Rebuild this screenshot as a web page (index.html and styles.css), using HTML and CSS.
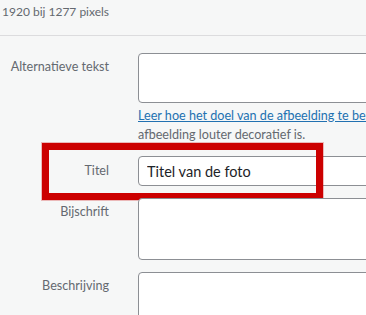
FILE: index.html
```html
<!DOCTYPE html>
<html lang="nl">
<head>
<meta charset="utf-8">
<title>Bijlage details</title>
<link rel="stylesheet" href="styles.css">
</head>
<body>
<div class="page">
  <div class="meta">1920 bij 1277 pixels</div>
  <div class="settings">
    <div class="row">
      <label class="label label-ta" for="alt">Alternatieve tekst</label>
      <div class="field">
        <textarea id="alt" class="ta ta-alt"></textarea>
        <p class="desc"><a href="#" class="link">Leer hoe het doel van de afbeelding te beschrijven</a><br>afbeelding louter decoratief is.</p>
      </div>
    </div>
    <div class="row row-title">
      <label class="label label-input" for="title">Titel</label>
      <div class="field">
        <input id="title" class="input" type="text" value="Titel van de foto">
      </div>
      <div class="highlight"></div>
    </div>
    <div class="row">
      <label class="label label-ta" for="caption">Bijschrift</label>
      <div class="field">
        <textarea id="caption" class="ta ta-caption"></textarea>
      </div>
    </div>
    <div class="row">
      <label class="label label-ta" for="desc">Beschrijving</label>
      <div class="field">
        <textarea id="desc" class="ta ta-desc"></textarea>
      </div>
    </div>
  </div>
</div>
</body>
</html>
```

FILE: styles.css
```css
html, body {
  margin: 0;
  padding: 0;
  background: #f6f7f7;
  overflow: hidden;
}
body {
  font-family: "Lato", "Noto Sans", sans-serif;
  font-size: 12.6px;
  color: #646970;
}
.page {
  width: 366px;
  height: 315px;
  overflow: hidden;
}
.meta {
  padding: 3px 0 14px 2px;
  line-height: 18px;
  font-size: 12px;
  border-bottom: 1px solid #dcdcde;
}
.settings {
  padding-top: 17px;
  display: flex;
  flex-direction: column;
  gap: 12px;
}
.row {
  display: grid;
  grid-template-columns: 126px 300px;
  column-gap: 12px;
  position: relative;
}
.label {
  text-align: right;
  padding-right: 17px;
  line-height: 18px;
  color: #646970;
  white-space: nowrap;
}
.label-ta { padding-top: 5px; }
.label-input { padding-top: 6px; }
.field {
  min-width: 0;
}
.ta, .input {
  display: block;
  box-sizing: border-box;
  width: 300px;
  margin: 0;
  background: #fff;
  border: 1px solid #8c8f94;
  border-radius: 4px;
  resize: none;
  font-family: inherit;
}
.ta-alt { height: 50px; }
.ta-caption { height: 62px; }
.ta-desc { height: 62px; }
.input {
  height: 30px;
  padding: 0 8px;
  font-size: 14.5px;
  color: #1d2327;
}
.desc {
  margin: 3px 0 0;
  line-height: 19px;
  white-space: nowrap;
}
.link {
  color: #2271b1;
  text-decoration: underline;
}
.highlight {
  position: absolute;
  left: 42px;
  top: -13px;
  width: 281px;
  height: 57px;
  box-sizing: border-box;
  border: 7px solid #cc0000;
  box-shadow: 0 0 0 1px rgba(204, 0, 0, 0.25);
  pointer-events: none;
}
```
